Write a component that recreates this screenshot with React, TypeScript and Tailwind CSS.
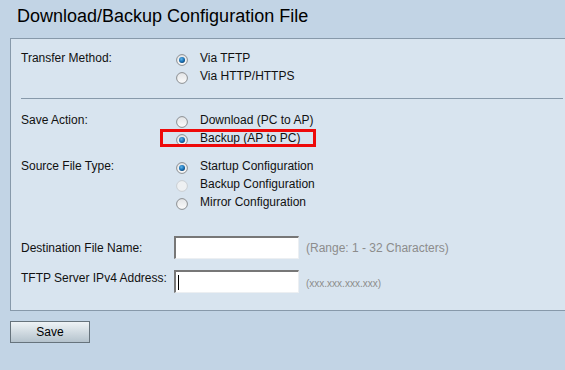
import React from "react";

function Radio({ checked = false, disabled = false }: { checked?: boolean; disabled?: boolean }) {
  return (
    <svg width="12" height="12" viewBox="0 0 12 12" className="shrink-0 mt-[5px] ml-[1px]">
      <defs>
        <linearGradient id="rfill" x1="0" y1="0" x2="0" y2="1">
          <stop offset="0" stopColor="#e2e4e6" />
          <stop offset="1" stopColor="#fbfbfb" />
        </linearGradient>
        <radialGradient id="rdot" cx="0.4" cy="0.35" r="0.7">
          <stop offset="0" stopColor="#5fb4ea" />
          <stop offset="0.6" stopColor="#1a73b8" />
          <stop offset="1" stopColor="#0b3f6e" />
        </radialGradient>
      </defs>
      <circle
        cx="6"
        cy="6"
        r="5.4"
        fill={disabled ? "#eef0f2" : "url(#rfill)"}
        stroke={disabled ? "#c9ced3" : "#8b8e91"}
        strokeWidth="1"
      />
      {checked && <circle cx="6" cy="6" r="3" fill="url(#rdot)" />}
    </svg>
  );
}

function RadioOption({ label, checked, disabled }: { label: string; checked?: boolean; disabled?: boolean }) {
  return (
    <div className="flex items-start h-[18px]">
      <Radio checked={checked} disabled={disabled} />
      <span className="ml-[12px] leading-[18px]">{label}</span>
    </div>
  );
}

function TextBox({ cursor = false }: { cursor?: boolean }) {
  return (
    <div className="w-[125px] h-[23px] bg-white border-t-2 border-l-2 border-b border-r border-t-[#777] border-l-[#777] border-b-[#eceff2] border-r-[#eceff2] flex items-center pl-[2px]">
      {cursor && <span className="w-px h-[15px] bg-black" />}
    </div>
  );
}

export default function App() {
  return (
    <div className="w-[565px] h-[370px] overflow-hidden bg-[#c2d4e5] text-[12px] text-[#111] font-['Liberation_Sans',Arial,sans-serif]">
      <h1 className="h-[38px] pl-[17px] pt-[6px] text-[18px] leading-[21px] text-black">
        Download/Backup Configuration File
      </h1>

      <div className="ml-[10px] bg-[#d8e4ef] border-t border-l border-b border-[#8799aa] pl-[10px] pt-[10px] pb-[17px]">
        <div className="flex">
          <div className="w-[154px] leading-[18px]">Transfer Method:</div>
          <div>
            <RadioOption label="Via TFTP" checked />
            <RadioOption label="Via HTTP/HTTPS" />
          </div>
        </div>

        <div className="mt-[13px] mr-[2px] h-px bg-[#8799aa]" />

        <div className="flex mt-[12px]">
          <div className="w-[154px] leading-[18px]">Save Action:</div>
          <div>
            <RadioOption label="Download (PC to AP)" />
            <div className="relative">
              <RadioOption label="Backup (AP to PC)" checked />
              <span className="absolute left-[-15px] top-0 w-[156px] h-[18px] border-[3px] border-[#ee0a0a]" />
            </div>
          </div>
        </div>

        <div className="flex mt-[10px]">
          <div className="w-[154px] leading-[18px]">Source File Type:</div>
          <div>
            <RadioOption label="Startup Configuration" checked />
            <RadioOption label="Backup Configuration" disabled />
            <RadioOption label="Mirror Configuration" />
          </div>
        </div>

        <div className="flex items-center mt-[25px]">
          <div className="w-[153px]">Destination File Name:</div>
          <TextBox />
          <span className="ml-[7px] text-[#8c8c8c]">(Range: 1 - 32 Characters)</span>
        </div>

        <div className="flex items-center mt-[11px]">
          <div className="w-[153px] -translate-y-[4px]">TFTP Server IPv4 Address:</div>
          <TextBox cursor />
          <span className="ml-[7px] text-[10px] text-[#8c8c8c] translate-y-[2px]">(xxx.xxx.xxx.xxx)</span>
        </div>
      </div>

      <button className="ml-[10px] mt-[10px] w-[80px] h-[22px] border border-[#66737c] bg-linear-to-b from-[#eef3f6] to-[#b5c3cd] text-[12px] text-black leading-none">
        Save
      </button>
    </div>
  );
}
